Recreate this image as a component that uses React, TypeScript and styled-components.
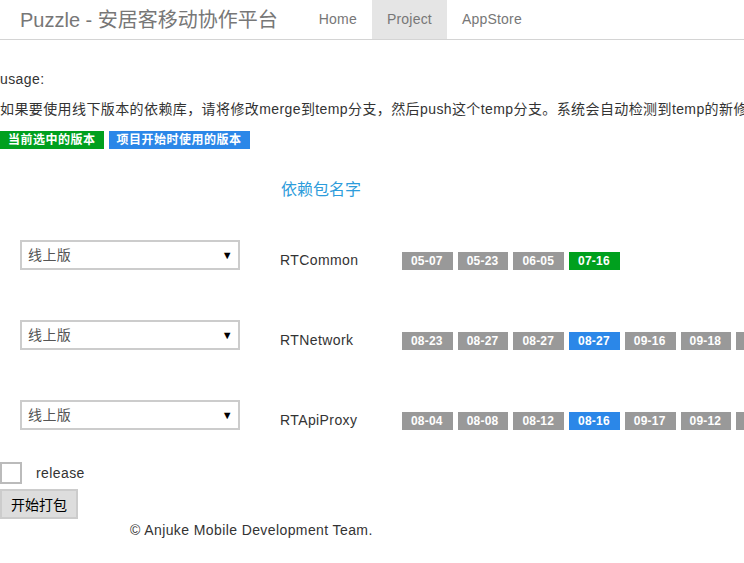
import React from 'react';
import styled, { createGlobalStyle } from 'styled-components';

const GlobalStyle = createGlobalStyle`
  html, body {
    margin: 0;
    padding: 0;
    overflow: hidden;
    background: #ffffff;
  }
  body {
    font-family: 'Liberation Sans', Arial, 'Noto Sans CJK SC', sans-serif;
    font-size: 14px;
    line-height: 20px;
    color: #333333;
  }
`;

const NavBar = styled('div')`
  display: flex;
  align-items: stretch;
  height: 39px;
  border-bottom: 1px solid #d4d4d4;
  background: #ffffff;
`;

const Brand = styled('a')`
  display: block;
  padding: 8px 20px 0 20px;
  margin-right: 6px;
  font-size: 20px;
  line-height: 24px;
  color: #777777;
  text-decoration: none;
`;

const NavItem = styled('a')<{ active?: boolean }>`
  display: block;
  padding: 9px 15px 0;
  color: #777777;
  letter-spacing: 0.2px;
  text-decoration: none;
  background: ${(props) => (props.active ? '#e5e5e5' : 'transparent')};
`;

const Container = styled('div')`
  padding-top: 29px;
  white-space: nowrap;
  letter-spacing: 0.4px;
`;

const Paragraph = styled('p')`
  margin: 0 0 10px 0;
  line-height: 20px;
`;

const LegendRow = styled('div')`
  display: flex;
  gap: 5px;
  margin-top: 12px;
  letter-spacing: 0.5px;
`;

const Label = styled('span')<{ color: string }>`
  display: inline-block;
  height: 18px;
  line-height: 18px;
  padding: 0 8px;
  font-size: 12px;
  font-weight: bold;
  color: #ffffff;
  background: ${(props) => props.color};
`;

const DepTable = styled('div')`
  display: grid;
  grid-template-columns: 280px 122px 1fr;
  margin-top: 31px;
`;

const HeaderCell = styled('div')`
  grid-column: 2 / 4;
  height: 40px;
  font-size: 16px;
  line-height: 20px;
  letter-spacing: 0;
  padding-left: 1px;
  color: #2d9cdb;
`;

const Cell = styled('div')`
  height: 80px;
  display: flex;
  align-items: center;
`;

const SelectBox = styled('div')`
  box-sizing: border-box;
  display: flex;
  align-items: center;
  justify-content: space-between;
  width: 220px;
  height: 30px;
  margin: 0 0 10px 20px;
  padding: 0 5px 0 6px;
  border: 2px solid #cccccc;
  background: #ffffff;
  color: #555555;
`;

const Arrow = styled('span')`
  font-size: 11px;
  color: #000000;
  margin-top: -1px;
`;

const DepName = styled('div')`
  padding-top: 0;
`;

const BadgeList = styled('div')`
  display: flex;
  gap: 5px;
  padding-top: 2px;
  letter-spacing: 0.2px;
`;

const Badge = styled('span')<{ kind?: 'current' | 'initial' }>`
  display: inline-block;
  height: 18px;
  line-height: 18px;
  padding: 0 10px 0 9px;
  font-size: 12px;
  font-weight: bold;
  color: #ffffff;
  background: ${(props) =>
    props.kind === 'current'
      ? '#00a01e'
      : props.kind === 'initial'
        ? '#2b87e8'
        : '#999999'};
`;

const CheckRow = styled('div')`
  display: flex;
  align-items: center;
  gap: 14px;
  margin-top: 2px;
`;

const CheckBox = styled('span')`
  box-sizing: border-box;
  display: block;
  width: 22px;
  height: 22px;
  border: 2px solid #bbbbbb;
  background: #ffffff;
`;

const Button = styled('button')`
  display: block;
  box-sizing: border-box;
  height: 30px;
  margin-top: 5px;
  padding: 0 9px;
  border: 2px solid #cccccc;
  background: #dddddd;
  color: #000000;
  font-family: 'Liberation Sans', Arial, 'Noto Sans CJK SC', sans-serif;
  font-size: 14px;
`;

const Footer = styled('div')`
  padding-left: 130px;
  margin-top: 1px;
  line-height: 20px;
`;

type Dep = {
  name: string;
  versions: string[];
  current?: number;
  initial?: number;
};

const deps: Dep[] = [
  { name: 'RTCommon', versions: ['05-07', '05-23', '06-05', '07-16'], current: 3 },
  {
    name: 'RTNetwork',
    versions: ['08-23', '08-27', '08-27', '08-27', '09-16', '09-18', '09-24', '10-02'],
    initial: 3,
  },
  {
    name: 'RTApiProxy',
    versions: ['08-04', '08-08', '08-12', '08-16', '09-17', '09-12', '09-26', '10-08'],
    initial: 3,
  },
];

export default function App() {
  return (
    <>
      <GlobalStyle />
      <NavBar>
        <Brand>Puzzle - 安居客移动协作平台</Brand>
        <NavItem>Home</NavItem>
        <NavItem active>Project</NavItem>
        <NavItem>AppStore</NavItem>
      </NavBar>
      <Container>
        <Paragraph>usage:</Paragraph>
        <Paragraph>
          如果要使用线下版本的依赖库，请将修改merge到temp分支，然后push这个temp分支。系统会自动检测到temp的新修改并重新打包。
        </Paragraph>
        <LegendRow>
          <Label color="#00a01e">当前选中的版本</Label>
          <Label color="#2b87e8">项目开始时使用的版本</Label>
        </LegendRow>
        <DepTable>
          <HeaderCell>依赖包名字</HeaderCell>
          {deps.map((dep) => (
            <React.Fragment key={dep.name}>
              <Cell>
                <SelectBox>
                  <span>线上版</span>
                  <Arrow>▼</Arrow>
                </SelectBox>
              </Cell>
              <Cell>
                <DepName>{dep.name}</DepName>
              </Cell>
              <Cell>
                <BadgeList>
                  {dep.versions.map((v, i) => (
                    <Badge
                      key={i}
                      kind={i === dep.current ? 'current' : i === dep.initial ? 'initial' : undefined}
                    >
                      {v}
                    </Badge>
                  ))}
                </BadgeList>
              </Cell>
            </React.Fragment>
          ))}
        </DepTable>
        <CheckRow>
          <CheckBox />
          <span>release</span>
        </CheckRow>
        <Button>开始打包</Button>
        <Footer>© Anjuke Mobile Development Team.</Footer>
      </Container>
    </>
  );
}
